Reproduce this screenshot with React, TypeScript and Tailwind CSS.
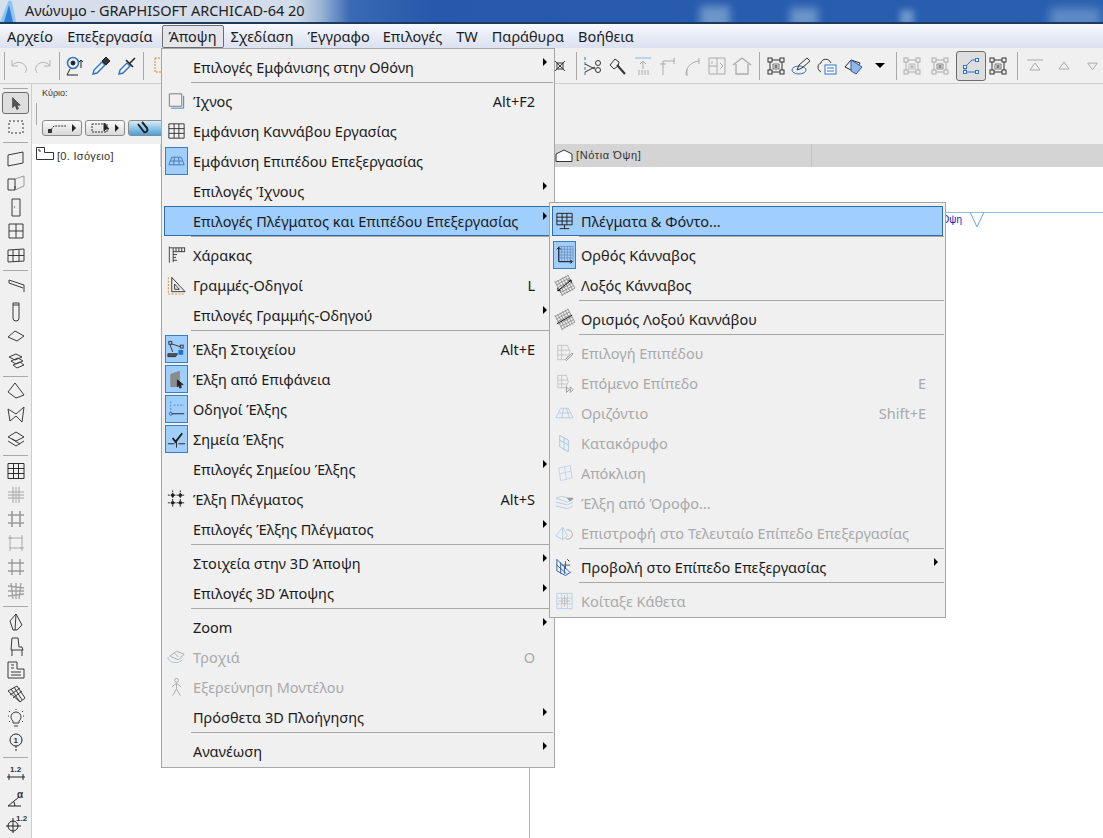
import React from 'react';

// shared svg wrapper, 22 box
function G({ children, s = 22, c = '#3a3a3a', className = '' }: { children?: React.ReactNode; s?: number; c?: string; className?: string }) {
  return (
    <svg viewBox="0 0 22 22" width={s} height={s} fill="none" stroke={c} strokeWidth={1} className={className}>
      {children}
    </svg>
  );
}

const P = ({ d, c, w, f, dash }: { d: string; c?: string; w?: number; f?: string; dash?: string }) => (
  <path d={d} stroke={c} strokeWidth={w} fill={f} strokeDasharray={dash} />
);

const T = ({ x, y, t, size = 8, c = '#333' }: { x: number; y: number; t: string; size?: number; c?: string }) => (
  <text x={x} y={y} fontSize={size} fill={c} stroke="none" fontWeight={700} fontFamily="Liberation Sans, sans-serif">{t}</text>
);

function NodeBox({ c = '#333', inner = '#777' }: { c?: string; inner?: string }) {
  const corners = [[3, 3], [15, 3], [3, 15], [15, 15]];
  return (
    <G c={c}>
      <P d="M5 5h12v12H5z" />
      <P d="M8 9h6v5H8z" c={inner} />
      {corners.map(([x, y]) => (
        <rect key={`${x}-${y}`} x={x} y={y} width={4} height={4} fill="#f0f0f0" />
      ))}
      <rect x={9.5} y={10} width={3} height={3} fill={inner} stroke="none" />
    </G>
  );
}

function Hash({ c = '#9a9a9a', w = 1.4 }: { c?: string; w?: number }) {
  return (
    <G c={c}>
      <P w={w} d="M7 3v16M15 3v16M3 7h16M3 15h16" />
    </G>
  );
}

function Grid({ c = '#333' }: { c?: string }) {
  return (
    <G c={c}>
      <P d="M3 3.5h16v15H3zM8.5 3.5v15M13.5 3.5v15M3 8.5h16M3 13.5h16" />
    </G>
  );
}

// dense slanted mesh with a dark arrow across it
function SkewGrid({ arrow = 'M4 17L18 6M4 14v3h3M15 6h3v3' }: { arrow?: string }) {
  return (
    <G c="#8a8a8a">
      <g transform="rotate(-28 11 11)" strokeWidth={0.8}>
        <path d="M3 4h16M3 7h16M3 10h16M3 13h16M3 16h16M3 19h16M4 3v17M7 3v17M10 3v17M13 3v17M16 3v17M19 3v17" />
      </g>
      <P d={arrow} c="#111" />
    </G>
  );
}

const icons = {
  trace: (
    <G>
      <P d="M3.500 3.500h13v13h-13z" c="#777" />
      <P d="M5.500 18.500h13v-13" c="#3f7fd0" />
    </G>
  ),
  grid: <Grid />,
  plane: (
    <G c="#4a78b0">
      <P d="M6 7h10l3 8H3zM4.500 11h13M9 7l-1 8M13 7l1 8" />
    </G>
  ),
  ruler: (
    <G>
      <P d="M3.500 2v17M3.500 3.500H20" c="#444" />
      <P d="M7.500 3.500v15M7.500 7.500H20M10.500 3.500v4M13.500 3.500v4M16.500 3.500v4M19.500 3.500v4M7.500 10.500h4M7.500 13.500h3M7.500 16.500h4" />
    </G>
  ),
  guide: (
    <G c="#333">
      <P d="M6 3l14 15H6zM9 10l5 5.500H9z" />
      <P d="M2.500 3v17.500H20" c="#d98a2b" dash="2 1.500" />
    </G>
  ),
  snapEl: (
    <G c="#333">
      <P d="M4 5l12 4M4 6l3 8" />
      <rect x="3" y="3" width="3" height="3" fill="#9fcfff" />
      <rect x="15" y="7" width="3" height="3" fill="#9fcfff" />
      <P d="M2 16h10l-2 3H2z" f="#555" />
      <rect x="13" y="12" width="5" height="5" fill="#1f6fe0" stroke="none" />
    </G>
  ),
  snapSurf: (
    <G c="#777">
      <P d="M5 19V6l9-3v16z" f="#8c8c8c" c="#8c8c8c" />
      <P d="M12 12l6 5h-3l1 3-1.500.5-1-3-1.500 1.500z" f="#222" c="#222" />
    </G>
  ),
  guides: (
    <G c="#2f6fb5">
      <P d="M5 3v12M8 7h11" c="#4a84c8" dash="2 1.500" />
      <circle cx="5" cy="16" r="1.500" />
      <P d="M6 16h13" c="#222" />
    </G>
  ),
  snapPts: (
    <G c="#222">
      <P d="M2 16h7M13 16h7M11 12v8" />
      <P d="M7 10l3 4 7-9" w={2} />
    </G>
  ),
  gridSnap: (
    <G c="#222">
      <P d="M7 2v18M15 2v18M2 7h18M2 15h18" dash="2 1" />
      <circle cx="7" cy="7" r="1.500" fill="#222" />
      <circle cx="15" cy="7" r="1.500" fill="#222" />
      <circle cx="7" cy="15" r="1.500" fill="#222" />
      <circle cx="15" cy="15" r="1.500" fill="#222" />
    </G>
  ),
  orbit: (
    <G c="#aaa">
      <P d="M4 10l7-5 8 3-6 6zM9 7l4 4" />
      <P d="M2 11c0 6 11 8 15 3" c="#9cc3ea" />
    </G>
  ),
  walk: (
    <G c="#aaa">
      <circle cx="11" cy="4" r="2" />
      <P d="M11 7v6M6 11l5-4 5 4M11 13l-4 7M11 13l4 7" />
    </G>
  ),
  panel: (
    <G c="#222">
      <P d="M3 3h16v12H3zM8.500 3v12M13.500 3v12M3 7h16M3 11h16M11 15v4M6 19h10" />
    </G>
  ),
  ortho: (
    <G c="#6c8db5">
      <P w={0.8} d="M5 2h15v16H5zM8 2v16M11 2v16M14 2v16M17 2v16M5 5h15M5 8h15M5 11h15M5 14h15" />
      <P d="M5 3v15h14M3 5l2-2 2 2M17 16l2 2-2 2" c="#111" />
    </G>
  ),
  skew: <SkewGrid />,
  skewDef: <SkewGrid arrow="M3 16l16-9" />,
  pick: (
    <G c="#c4c4c4">
      <P d="M4 3h10l3 7-5 8H4zM8 3v15M4 8h12M4 13h10" />
      <P d="M12 18l7-7 1 1-7 7z" c="#999" />
    </G>
  ),
  next: (
    <G c="#c4c4c4">
      <P d="M4 3h9l2 7-3 6H4zM8 3v13M4 8h10M4 12h9" />
      <P d="M13 15l3 3-3 3zM17 15l3 3-3 3z" c="#999" />
    </G>
  ),
  hor: (
    <G c="#b7cde6">
      <P d="M7 6h8l5 10H2zM5 11h12M10 6l-2 10M13 6l3 10" />
    </G>
  ),
  vert: (
    <G c="#a9c5e6">
      <P d="M6 3l9 5v12l-9-5zM6 8l9 5M10.500 5.500v12" />
    </G>
  ),
  tilt: (
    <G c="#c2d3e8">
      <P d="M5 6l12-3 2 13-12 3zM11 4.500l2 13M6 12l12-3" />
    </G>
  ),
  fromStory: (
    <G c="#b7cde6">
      <P d="M2 6l6-2 12 3-6 3zM2 10l12 3 6-3M2 14l12 3 6-3" />
      <P d="M14 6h6l-3 3z" f="#999" c="#999" />
    </G>
  ),
  back: (
    <G c="#b7cde6">
      <P d="M2 14l7-9v13zM9 5l5 9-5 4" />
      <P d="M13 8c4-1 7 2 6 6-1 3-4 4-7 3" c="#aaa" />
    </G>
  ),
  project: (
    <G c="#2f5fa8">
      <P d="M3 3l13 13M3 3v12l9 5 6-4M3 9l10 9M7 6v12M11 10v8" />
      <P d="M12 5v8M8 9h9" c="#555" />
      <P d="M14 3l2 2" c="#111" />
    </G>
  ),
  look: (
    <G c="#c0c0c0">
      <P d="M3 3h16v16H3zM8 3v16M14 3v16M3 8h16M3 14h16" c="#bcd0e8" />
      <circle cx="11" cy="11" r="3" />
      <P d="M11 5v12M5 11h12" />
    </G>
  ),
};

type Item = {
  label?: string;
  icon?: React.ReactNode;
  on?: boolean;
  off?: boolean;
  key_?: string;
  sub?: boolean;
  hi?: boolean;
  sep?: boolean;
};

const viewMenu: Item[] = [
  { label: 'Επιλογές Εμφάνισης στην Οθόνη', sub: true },
  { sep: true },
  { label: 'Ίχνος', icon: icons.trace, key_: 'Alt+F2' },
  { label: 'Εμφάνιση Καννάβου Εργασίας', icon: icons.grid },
  { label: 'Εμφάνιση Επιπέδου Επεξεργασίας', icon: icons.plane, on: true },
  { label: 'Επιλογές Ίχνους', sub: true },
  { label: 'Επιλογές Πλέγματος και Επιπέδου Επεξεργασίας', sub: true, hi: true },
  { sep: true },
  { label: 'Χάρακας', icon: icons.ruler },
  { label: 'Γραμμές-Οδηγοί', icon: icons.guide, key_: 'L' },
  { label: 'Επιλογές Γραμμής-Οδηγού', sub: true },
  { sep: true },
  { label: 'Έλξη Στοιχείου', icon: icons.snapEl, on: true, key_: 'Alt+E' },
  { label: 'Έλξη από Επιφάνεια', icon: icons.snapSurf, on: true },
  { label: 'Οδηγοί Έλξης', icon: icons.guides, on: true },
  { label: 'Σημεία Έλξης', icon: icons.snapPts, on: true },
  { label: 'Επιλογές Σημείου Έλξης', sub: true },
  { label: 'Έλξη Πλέγματος', icon: icons.gridSnap, key_: 'Alt+S' },
  { label: 'Επιλογές Έλξης Πλέγματος', sub: true },
  { sep: true },
  { label: 'Στοιχεία στην 3D Άποψη', sub: true },
  { label: 'Επιλογές 3D Άποψης', sub: true },
  { sep: true },
  { label: 'Zoom', sub: true },
  { label: 'Τροχιά', icon: icons.orbit, off: true, key_: 'O' },
  { label: 'Εξερεύνηση Μοντέλου', icon: icons.walk, off: true },
  { label: 'Πρόσθετα 3D Πλοήγησης', sub: true },
  { sep: true },
  { label: 'Ανανέωση', sub: true },
];

const gridMenu: Item[] = [
  { label: 'Πλέγματα & Φόντο...', icon: icons.panel, hi: true },
  { sep: true },
  { label: 'Ορθός Κάνναβος', icon: icons.ortho, on: true },
  { label: 'Λοξός Κάνναβος', icon: icons.skew },
  { sep: true },
  { label: 'Ορισμός Λοξού Καννάβου', icon: icons.skewDef },
  { sep: true },
  { label: 'Επιλογή Επιπέδου', icon: icons.pick, off: true },
  { label: 'Επόμενο Επίπεδο', icon: icons.next, off: true, key_: 'E' },
  { label: 'Οριζόντιο', icon: icons.hor, off: true, key_: 'Shift+E' },
  { label: 'Κατακόρυφο', icon: icons.vert, off: true },
  { label: 'Απόκλιση', icon: icons.tilt, off: true },
  { label: 'Έλξη από Όροφο...', icon: icons.fromStory, off: true },
  { label: 'Επιστροφή στο Τελευταίο Επίπεδο Επεξεργασίας', icon: icons.back, off: true },
  { sep: true },
  { label: 'Προβολή στο Επίπεδο Επεξεργασίας', icon: icons.project, sub: true },
  { sep: true },
  { label: 'Κοίταξε Κάθετα', icon: icons.look, off: true },
];

function MenuRow({ item }: { item: Item }) {
  if (item.sep) {
    return (
      <div className="h-[4px] pl-[29px] pr-[1px]">
        <div className="h-px bg-[#a6a6a6]" />
      </div>
    );
  }
  return (
    <div className={`h-[30px] mx-[2px] flex items-center border ${item.hi ? 'bg-[#a0cffe] border-[#2f6da6]' : 'border-transparent'} ${item.off ? 'text-[#a9a9a9]' : 'text-[#1b1b1b]'}`}>
      <div className={`w-[23px] h-[28px] flex items-center justify-center shrink-0 border ${item.on ? 'bg-[#a0cffe] border-[#3a7fc0]' : 'border-transparent'}`}>
        {item.icon}
      </div>
      <span className="ml-[5px] pt-[2px] whitespace-nowrap">{item.label}</span>
      {item.key_ && <span className="ml-auto mr-[16px] pt-[2px]">{item.key_}</span>}
      {item.sub && <span className="ml-auto mr-[4px] self-start mt-[5px] w-0 h-0 border-y-[4px] border-y-transparent border-l-[4px] border-l-black" />}
    </div>
  );
}

const Sep = ({ className }: { className: string }) => (
  <div className={`flex justify-center items-center shrink-0 ${className}`}>
    <div className="w-px h-[28px] bg-[#a8a8a8]" />
  </div>
);

const Slot = ({ className, children }: { className: string; children?: React.ReactNode }) => (
  <div className={`flex justify-center items-center shrink-0 ${className}`}>{children}</div>
);

function Toolbar() {
  return (
    <div className="h-[36px] shrink-0 flex items-center bg-[#f0f0f0] border-b border-[#cfcfcf] overflow-hidden">
      <Sep className="w-[8px]" />
      <Slot className="w-[22px]"><G c="#b5b5b5"><P d="M4 5v6h6M4 11c3-5 11-5 14 1 1 2 0 4-1 6" /></G></Slot>
      <Slot className="w-[26px]"><G c="#b5b5b5"><P d="M18 5v6h-6M18 11c-3-5-11-5-14 1-1 2 0 4 1 6" /></G></Slot>
      <Sep className="w-[6px]" />
      <Slot className="w-[26px]">
        <G c="#222">
          <circle cx="9" cy="8" r="5.500" stroke="#2f74c8" strokeWidth="1.600" />
          <circle cx="9" cy="8" r="2" fill="#222" />
          <P d="M6 14l-3 6h11M17 5v8M15 7l2-2 2 2" />
        </G>
      </Slot>
      <Slot className="w-[26px]">
        <G c="#222"><P d="M3 19l1-4 8-8 3 3-8 8z" c="#2f74c8" w={1.400} /><P d="M13 5l3-3 4 4-3 3-1 1-4-4z" f="#333" /></G>
      </Slot>
      <Slot className="w-[26px]">
        <G c="#222"><P d="M3 19l1-4 7-7 3 3-7 7z" c="#2f74c8" w={1.400} /><P d="M10 5l7 7M14 8l5-5" w={1.500} /></G>
      </Slot>
      <Sep className="w-[6px]" />
      <Slot className="w-[28px]"><G c="#d98a2b"><P d="M6 3h8v14H6z" dash="2 1" /></G></Slot>

      <div className="ml-auto flex items-center shrink-0">
        <Slot className="w-[24px]"><G c="#333"><P d="M6 6l10 10M16 6L6 16M8 8h6v6H8z" /></G></Slot>
        <Sep className="w-[8px]" />
        <Slot className="w-[26px]">
          <G c="#333"><P d="M3 2v18" c="#2f74c8" dash="3 2" /><P d="M3 9l10 5M3 17l10-5" /><circle cx="16" cy="8" r="2.500" /><circle cx="16" cy="15" r="2.500" /></G>
        </Slot>
        <Slot className="w-[24px]"><G c="#333"><P d="M3 10l5-6 4 3-1 4-4 3z" /><P d="M10 10l8 9" w={2} /></G></Slot>
        <Slot className="w-[26px]"><G c="#aaa"><P d="M3 3h16" c="#8fb8e6" /><P d="M11 14V6M8 9l3-3 3 3M7 15v5M10 15v5M13 15v5M16 15v5" /></G></Slot>
        <Slot className="w-[25px]"><G c="#aaa"><P d="M5 20V6h12M2 9h6M16 3v6" /></G></Slot>
        <Slot className="w-[24px]"><G c="#aaa"><P d="M4 20c0-8 5-13 13-14M17 3v6M5 14v7" /></G></Slot>
        <Slot className="w-[24px]"><G c="#aaa"><P d="M3 3h16v16H3zM3 11h8v8M11 3v8M14 8l3 3-3 3M6 9V6" /></G></Slot>
        <Slot className="w-[26px]"><G c="#aaa"><P d="M2 10l9-7 9 7M5 9v10h12V9" w={1.300} /></G></Slot>
        <Sep className="w-[8px]" />
        <Slot className="w-[25px]"><NodeBox /></Slot>
        <Slot className="w-[26px]">
          <G c="#333"><ellipse cx="9" cy="15" rx="7" ry="4" stroke="#2f74c8" /><P d="M7 15l2-5 8-7 3 3-8 7z" /></G>
        </Slot>
        <Slot className="w-[26px]">
          <G c="#333"><P d="M5 17C1 15 1 9 5 8c1-5 8-5 10 0" /><rect x="9" y="10" width="11" height="9" fill="#fff" stroke="#2f74c8" /><P d="M11 13h7M11 16h7" c="#2f74c8" /></G>
        </Slot>
        <Slot className="w-[28px]">
          <G c="#222"><P d="M2 12l6-7 9 3-5 9z" /><P d="M8 5l11 7-6 7-5-3z" f="#8fb8e6" c="#2f5fa8" /></G>
        </Slot>
        <Slot className="w-[24px]"><div className="w-0 h-0 border-x-[5px] border-x-transparent border-t-[5px] border-t-black" /></Slot>
        <Sep className="w-[8px]" />
        <Slot className="w-[23px]"><NodeBox c="#aaa" inner="#bbb" /></Slot>
        <Slot className="w-[33px]"><NodeBox c="#aaa" inner="#888" /></Slot>
        <Slot className="w-[30px] h-[30px] rounded-[3px] border border-[#6d6d6d] bg-[#dedede]">
          <G c="#2f74c8">
            <P d="M5 17V12l7-7h5M5 17h12" />
            <rect x="3.500" y="15.500" width="3" height="3" fill="#fff" />
            <rect x="3.500" y="10.500" width="3" height="3" fill="#fff" />
            <rect x="15.500" y="3.500" width="3" height="3" fill="#fff" />
            <rect x="15.500" y="15.500" width="3" height="3" fill="#fff" />
          </G>
        </Slot>
        <Slot className="w-[24px]"><NodeBox /></Slot>
        <Sep className="w-[14px]" />
        <Slot className="w-[22px]"><G c="#aaa"><P d="M3 5h16M11 8l5 7H6z" /></G></Slot>
        <Slot className="w-[36px]"><G c="#aaa"><P d="M11 7l5 7H6z" /></G></Slot>
        <Slot className="w-[21px]"><G c="#aaa"><P d="M11 15L6 8h10z" /></G></Slot>
      </div>
    </div>
  );
}

function ToolIcon({ children, h = 'h-[24px]' }: { children: React.ReactNode; h?: string }) {
  return <div className={`${h} shrink-0 flex items-center justify-center`}>{children}</div>;
}

const PalSep = ({ h }: { h: string }) => (
  <div className={`${h} shrink-0 flex items-center px-[3px]`}>
    <div className="h-px w-full bg-[#a8a8a8]" />
  </div>
);

function Palette() {
  return (
    <div className="w-[32px] shrink-0 bg-[#f0f0f0] border-r border-[#cdcdcd] flex flex-col overflow-hidden">
      <PalSep h="h-[8px]" />
      <div className="mx-[2px] h-[22px] shrink-0 rounded-[3px] border border-[#6d6d6d] bg-[#dedede] flex items-center justify-center">
        <svg viewBox="0 0 14 16" width="12" height="15"><path d="M3 1v12l3-3 2 5 2-1-2-4h4z" fill="#555" stroke="#222" strokeWidth="0.6" /></svg>
      </div>
      <ToolIcon h="h-[26px]"><G c="#333"><P d="M4 5h14v12H4z" dash="2 2" /></G></ToolIcon>
      <PalSep h="h-[5px]" />
      <div className="h-[2px] shrink-0" />
      <ToolIcon><G><P d="M3 7l15-3v11L3 18z" /></G></ToolIcon>
      <ToolIcon><G><P d="M3 7h7v11H3zM10 14l-0 4" /><P d="M10 7l9-3v10l-9 4" c="#999" /></G></ToolIcon>
      <ToolIcon><G><P d="M7 3h8v17H7zM9 11h1" /></G></ToolIcon>
      <ToolIcon><G><P d="M4 4h14v14H4zM11 4v14M4 11h14" /></G></ToolIcon>
      <ToolIcon><G><P d="M3 6l16-1v12L3 18zM3 11.500h16M8 6v12M14 5.500v12" /></G></ToolIcon>
      <PalSep h="h-[6px]" />
      <ToolIcon h="h-[25px]"><G><P d="M4 5l15 5v7M4 5v3l14 5" /></G></ToolIcon>
      <ToolIcon h="h-[25px]"><G><P d="M8 3h6v15a3 3 0 01-6 0zM8 5h6" /></G></ToolIcon>
      <ToolIcon h="h-[25px]"><G><P d="M3 12l7-6 9 5-7 5z" /></G></ToolIcon>
      <ToolIcon h="h-[25px]"><G><P d="M4 7l7-3 6 3-7 3zM6 11l7-3 5 3-7 3zM8 15l7-3 4 3-7 3z" /></G></ToolIcon>
      <PalSep h="h-[6px]" />
      <ToolIcon><G><P d="M3 12l7-9 9 12-8 3z" /></G></ToolIcon>
      <ToolIcon><G><P d="M3 5l8 5 8-7-2 15-6-6-6 5z" /></G></ToolIcon>
      <ToolIcon><G><P d="M3 9l8-5 8 5-8 4zM3 13l8 5 8-5M7 11l8 5" /></G></ToolIcon>
      <PalSep h="h-[8px]" />
      <ToolIcon><Grid c="#2c2c2c" /></ToolIcon>
      <ToolIcon><G c="#a8a8a8"><P d="M8 3v16M11 3v16M14 3v16M3 8h16M3 11h16M3 14h16" /></G></ToolIcon>
      <ToolIcon><Hash w={1.600} /></ToolIcon>
      <ToolIcon><G c="#aaa"><P d="M5 6h12v10H5zM3 6h4M15 16h4M5 3v4M17 15v4M17 3v4M5 15v4" /></G></ToolIcon>
      <ToolIcon><Hash /></ToolIcon>
      <ToolIcon><G c="#a0a0a0"><P w={1.300} d="M6 3l2 16M11 3v16M16 3l-2 16M3 6l16 2M3 11h16M3 16l16-2" /></G></ToolIcon>
      <PalSep h="h-[7px]" />
      <ToolIcon><G><P d="M8 19L5 10l6-7 6 11-5 5zM11 3l-1 16" /></G></ToolIcon>
      <ToolIcon><G><P d="M7 3h6l1 9h3l1 3H6zM7 15v6M17 15v6" /></G></ToolIcon>
      <ToolIcon><G><P d="M3 3h9v7h7v9H3zM6 6h3M6 9h3M6 13h10M6 16h10" /></G></ToolIcon>
      <ToolIcon><G><P d="M3 8l9-5 8 12-5 4zM6 6l9 13M9 4l8 13M5 12l10-7M8 15l9-7" /></G></ToolIcon>
      <ToolIcon><G><P d="M8 14a5 5 0 116 0v2H8zM9 19h4M11 2v1M3 9h1M18 9h1M4 4l1 1M17 4l1 1M5 14l-1 1M17 14l1 1" /></G></ToolIcon>
      <ToolIcon>
        <G c="#222"><circle cx="11" cy="9" r="6" /><P d="M11 15v5" dash="2 1" /><T x={8.500} y={12} t="1" size={8} /></G>
      </ToolIcon>
      <PalSep h="h-[7px]" />
      <ToolIcon h="h-[26px]">
        <G c="#222"><T x={5} y={9} t="1.2" /><P d="M2 14h18M4 11v6M18 11v6" /></G>
      </ToolIcon>
      <ToolIcon h="h-[24px]">
        <G c="#222"><P d="M3 18h13M3 18L14 9M9 14l1 4" /><T x={12} y={10} t="α" size={10} /></G>
      </ToolIcon>
      <ToolIcon h="h-[24px]">
        <G c="#222"><circle cx="8" cy="14" r="5" /><P d="M8 6v15M1 14h15" /><T x={11} y={9} t="1.2" /></G>
      </ToolIcon>
    </div>
  );
}

function OptBtn({ className, children, arrow = true }: { className: string; children: React.ReactNode; arrow?: boolean }) {
  return (
    <div className={`h-[16px] flex items-center justify-between px-[5px] rounded-[3px] border border-[#8a8a8a] ${className}`}>
      {children}
      {arrow && <span className="w-0 h-0 border-y-[4px] border-y-transparent border-l-[4px] border-l-[#222]" />}
    </div>
  );
}

export default function App() {
  const menus = ['Αρχείο', 'Επεξεργασία', 'Άποψη', 'Σχεδίαση', 'Έγγραφο', 'Επιλογές', 'TW', 'Παράθυρα', 'Βοήθεια'];
  return (
    <div className="relative w-[1103px] h-[838px] overflow-hidden bg-white flex flex-col font-['Noto_Sans',sans-serif] text-[14.5px] text-[#1b1b1b]">
      {/* title bar */}
      <div className="relative h-[24px] shrink-0 overflow-hidden border-b-2 border-b-[#1d3a5f] bg-[linear-gradient(to_right,#d6dfeb_0px,#d3dde9_295px,#9db6d6_320px,#3a6ab4_350px,#2659ac_430px,#2a5fb0_1103px)] flex items-center">
        <span className="absolute left-[700px] top-[6px] w-[30px] h-[24px] bg-[#6d96ca] blur-[4px]" />
        <span className="absolute left-[790px] top-[8px] w-[28px] h-[20px] bg-[#6d96ca] blur-[4px]" />
        <span className="absolute left-[900px] top-[10px] w-[14px] h-[16px] bg-[#6d96ca] blur-[3px]" />
        <span className="absolute left-[1050px] top-[8px] w-[50px] h-[20px] bg-[#5f8cc6] blur-[5px]" />
        <svg viewBox="0 0 18 22" width="18" height="22" className="shrink-0">
          <path d="M0 22L8 2c1-2 3-2 4 0l4 20z" fill="#8fc3f0" />
          <path d="M4 22L9 5l4 17z" fill="#2f7fd8" />
        </svg>
        <span className="ml-[7px] text-[#222] whitespace-nowrap">Ανώνυμο - GRAPHISOFT ARCHICAD-64 20</span>
      </div>

      {/* menu bar */}
      <div className="h-[24px] shrink-0 flex items-center bg-[linear-gradient(to_bottom,#f9fafc,#e9edf6_45%,#dbe1f0)]">
        {menus.map((m) => (
          <span key={m} className={`h-[23px] px-[6px] pt-[2px] flex items-center rounded-[2px] border whitespace-nowrap ${m === 'Άποψη' ? 'ml-[2px] border-[#6d6d6d] bg-[#e4e6ec]' : 'border-transparent'} ${m === 'Επιλογές' ? '-ml-[1px]' : ''}`}>
            {m}
          </span>
        ))}
      </div>

      <Toolbar />

      <div className="flex-1 flex min-h-0">
        <Palette />
        <div className="flex-1 flex flex-col min-w-0">
          {/* options bar */}
          <div className="h-[60px] shrink-0 bg-[#f0f0f0] pl-[4px] flex">
            <div className="w-px h-[22px] mt-[19px] bg-[#a8a8a8]" />
            <div className="ml-[5px] pt-[4px] flex flex-col">
              <span className="text-[9px] leading-[11px] text-[#333] font-['Liberation_Sans',sans-serif]">Κύριο:</span>
              <div className="mt-[21px] flex gap-[3px]">
                <OptBtn className="w-[40px] bg-[linear-gradient(to_bottom,#fafafa,#d8d8d8)]">
                  <svg viewBox="0 0 20 10" width="20" height="10" fill="none" stroke="#333"><path d="M1 9l5-6h12" strokeDasharray="2 1" /><rect x="0.500" y="6.500" width="3" height="3" fill="#333" /></svg>
                </OptBtn>
                <OptBtn className="w-[40px] bg-[linear-gradient(to_bottom,#fafafa,#d8d8d8)]">
                  <svg viewBox="0 0 20 10" width="20" height="10" fill="none" stroke="#333"><path d="M1 1h15v8H1z" strokeDasharray="2 1" /><path d="M13 0v8l2-2h3z" fill="#222" /></svg>
                </OptBtn>
                <OptBtn arrow={false} className="w-[40px] bg-[linear-gradient(to_bottom,#d8ecf8,#4aa0d8)]">
                  <svg viewBox="0 0 16 14" width="16" height="14" fill="none" stroke="#222" strokeWidth="2"><path d="M4 3l6 8c3 1 4-2 3-4L8 1" /></svg>
                </OptBtn>
              </div>
            </div>
          </div>

          <div className="flex-1 flex min-h-0">
            {/* navigator */}
            <div className="w-[128px] shrink-0 bg-white pt-[3px] pl-[4px] flex items-start gap-[3px]">
              <svg viewBox="0 0 18 13" width="18" height="13" fill="none" stroke="#333"><path d="M.500.500h8v5h9v7h-17zM3 2v2h2" /></svg>
              <span className="mt-[3px] text-[11px] leading-[13px] font-['Liberation_Sans',sans-serif] tracking-[0.3px] text-[#333] whitespace-nowrap">[0. Ισόγειο]</span>
            </div>

            <div className="flex-1 flex flex-col min-w-0">
              {/* tabs */}
              <div className="h-[23px] shrink-0 bg-[#d4d4d4] flex items-center pl-[395px]">
                <svg viewBox="0 0 18 13" width="18" height="13" fill="#fff" stroke="#333"><path d="M1 12.500V5l8-4 8 4v7.500z" /></svg>
                <span className="ml-[3px] w-[236px] h-full flex items-center border-r border-r-[#c2c2c2] text-[11px] font-['Liberation_Sans',sans-serif] tracking-[0.6px] text-[#333] whitespace-nowrap">[Νότια Όψη]</span>
              </div>
              {/* drawing area */}
              <div className="relative flex-1 bg-white">
                <div className="absolute left-[369px] top-0 bottom-0 w-px bg-[#93c0d6]" />
                <div className="absolute left-[700px] right-0 top-[45px] h-px bg-[#93c0d6]" />
                <span className="absolute right-[141px] top-[46px] text-[10px] leading-[13px] text-[#2020c0] font-['Liberation_Sans',sans-serif] whitespace-nowrap">Νότια Όψη</span>
                <svg viewBox="0 0 16 16" width="16" height="16" fill="none" stroke="#6aa8cc" className="absolute left-[809px] top-[45px]"><path d="M1 0l7 15 7-15" /></svg>
              </div>
            </div>
          </div>
        </div>
      </div>

      {/* open menus */}
      <div className="absolute left-[161px] top-[48px] w-[394px] pt-[3px] pb-[1px] bg-[#f0f0f0] border border-[#a6a6a6]">
        {viewMenu.map((it, i) => (
          <MenuRow key={i} item={it} />
        ))}
      </div>
      <div className="absolute left-[549px] top-[202px] w-[397px] pt-[3px] pb-[1px] bg-[#f0f0f0] border border-[#a6a6a6]">
        {gridMenu.map((it, i) => (
          <MenuRow key={i} item={it} />
        ))}
      </div>
    </div>
  );
}
